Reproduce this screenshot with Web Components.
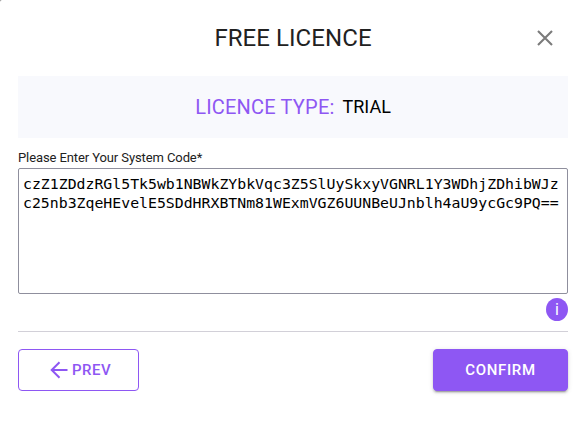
<!DOCTYPE html>
<html lang="en">
<head>
<meta charset="utf-8">
<title>Free Licence</title>
<style>
  body {
    margin: 0;
    background-color: #808080;
    color: #212121;
    font-family: Roboto, sans-serif;
  }
</style>
</head>
<body>
<licence-dialog>
  <span slot="title">FREE LICENCE</span>
  <licence-type slot="type" label="LICENCE TYPE:">TRIAL</licence-type>
  <code-field label="Please Enter Your System Code*" value="czZ1ZDdzRGl5Tk5wb1NBWkZYbkVqc3Z5SlUySkxyVGNRL1Y3WDhjZDhibWJzc25nb3ZqeHEvelE5SDdHRXBTNm81WExmVGZ6UUNBeUJnblh4aU9ycGc9PQ=="></code-field>
  <dialog-button slot="actions" variant="outlined">
    <svg slot="icon" width="18" height="18" viewBox="0 0 18 18" fill="none" stroke="currentColor" stroke-width="2"><path d="M17.5 9H2M9.5 1.2L1.7 9l7.8 7.8"/></svg>PREV</dialog-button>
  <dialog-button slot="actions" variant="filled">CONFIRM</dialog-button>
</licence-dialog>

<script>
/**
 * The dialog frame with header, content and action row.
 */
customElements.define('licence-dialog', class extends HTMLElement {
  constructor () {
    super()
    this.attachShadow({ mode: 'open' }).innerHTML = `
<style>
  :host {
    display: block;
    box-sizing: border-box;
    height: 437px;
    padding: 0 17px 0 18px;
    border-top-left-radius: 2px;
    background-color: #fff;
  }

  header {
    display: grid;
    grid-template-columns: 32px 1fr 32px;
    align-items: center;
    height: 76px;
  }

  h2 {
    grid-column: 2;
    margin: 0;
    font-size: 24px;
    font-weight: 400;
    line-height: 32px;
    letter-spacing: 0.07px;
    text-align: center;
  }

  button {
    display: flex;
    justify-content: center;
    width: 32px;
    padding: 0 14px 0 0;
    border: 0;
    background: none;
    color: #7b7b7b;
    cursor: pointer;
  }

  button svg {
    flex: none;
  }

  footer {
    display: flex;
    justify-content: space-between;
    margin-top: 10px;
    padding-top: 17px;
    border-top: 1px solid #d2d0d8;
  }
</style>
<header>
  <h2><slot name="title"></slot></h2>
  <button type="button" aria-label="Close">
    <svg width="16" height="16" viewBox="0 0 16 16" fill="none" stroke="currentColor" stroke-width="2.1"><path d="M1 1l14 14M15 1L1 15"/></svg>
  </button>
</header>
<slot name="type"></slot>
<slot></slot>
<footer><slot name="actions"></slot></footer>
`
  }
})

/**
 * The banner that shows the licence type.
 */
customElements.define('licence-type', class extends HTMLElement {
  constructor () {
    super()
    this.attachShadow({ mode: 'open' }).innerHTML = `
<style>
  :host {
    display: flex;
    align-items: center;
    justify-content: center;
    gap: 8px;
    height: 62px;
    background-color: #f8f9fd;
    color: #000;
    font-size: 18px;
  }

  .label {
    color: #8e57f3;
    font-size: 20px;
    letter-spacing: 0.2px;
  }

  .type {
    padding-bottom: 2px;
  }
</style>
<span class="label">${this.getAttribute('label')}</span>
<span class="type"><slot></slot></span>
`
  }
})

/**
 * A labelled text area with an info badge.
 */
customElements.define('code-field', class extends HTMLElement {
  constructor () {
    super()
    this.attachShadow({ mode: 'open' }).innerHTML = `
<style>
  :host {
    display: flex;
    flex-direction: column;
    padding-top: 12px;
  }

  label {
    font-size: 13px;
    line-height: 16px;
    letter-spacing: -0.1px;
    margin-bottom: 2px;
  }

  textarea {
    box-sizing: border-box;
    width: 100%;
    height: 126px;
    margin: 0;
    padding: 5px 4px;
    border: 1px solid #8f8f9d;
    border-radius: 2px;
    background-color: #fff;
    color: #000;
    font-family: "DejaVu Sans Mono", monospace;
    font-size: 14.83px;
    line-height: 19px;
    word-break: break-all;
    overflow: hidden;
    resize: none;
    outline: none;
  }

  .info {
    align-self: flex-end;
    display: flex;
    align-items: center;
    justify-content: center;
    width: 22px;
    height: 23px;
    margin-top: 4px;
    border-radius: 50%;
    background-color: #8e57f3;
    color: #fff;
    font-size: 16px;
  }
</style>
<label for="code">${this.getAttribute('label')}</label>
<textarea id="code" spellcheck="false">${this.getAttribute('value')}</textarea>
<span class="info">i</span>
`
  }
})

/**
 * A button, outlined or filled, with an optional icon.
 */
customElements.define('dialog-button', class extends HTMLElement {
  constructor () {
    super()
    this.attachShadow({ mode: 'open' }).innerHTML = `
<style>
  :host {
    display: block;
    width: 121px;
  }

  :host([variant="filled"]) {
    width: 135px;
  }

  button {
    display: flex;
    align-items: center;
    justify-content: center;
    gap: 4px;
    box-sizing: border-box;
    width: 100%;
    height: 42px;
    padding: 0 0 0 4px;
    border: 1px solid #8e57f3;
    border-radius: 4px;
    background-color: #fff;
    color: #8e57f3;
    font: 500 15px/26px Roboto, sans-serif;
    letter-spacing: 0.5px;
    cursor: pointer;
  }

  :host([variant="filled"]) button {
    padding: 0;
    background-color: #8e57f3;
    color: #fff;
    letter-spacing: 0.65px;
    box-shadow: 0 3px 1px -2px rgba(0, 0, 0, .2), 0 2px 2px rgba(0, 0, 0, .14), 0 1px 5px rgba(0, 0, 0, .12);
  }
</style>
<button type="button"><slot name="icon"></slot><span><slot></slot></span></button>
`
  }
})
</script>
</body>
</html>
